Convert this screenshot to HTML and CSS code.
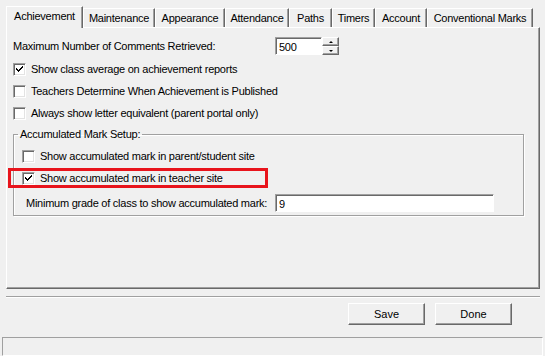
FILE: index.html
```html
<!DOCTYPE html>
<html lang="en">
<head>
    <meta charset="UTF-8">
    <meta name="viewport" content="width=device-width, initial-scale=1.0">
    <title>Achievement Settings</title>
    <link rel="stylesheet" href="styles.css">
</head>
<body>
    <div class="window">
        <div class="tabs">
            <div class="tab selected">Achievement</div>
            <div class="tab">Maintenance</div>
            <div class="tab">Appearance</div>
            <div class="tab">Attendance</div>
            <div class="tab">Paths</div>
            <div class="tab">Timers</div>
            <div class="tab">Account</div>
            <div class="tab">Conventional Marks</div>
        </div>

        <div class="panel">
            <div class="field-row">
                <label class="field-label">Maximum Number of Comments Retrieved:</label>
                <input class="textbox spin-input" type="text" value="500">
                <div class="spin">
                    <span class="spin-btn up"></span>
                    <span class="spin-btn down"></span>
                </div>
            </div>

            <div class="check-row">
                <span class="checkbox checked"></span>
                <span>Show class average on achievement reports</span>
            </div>
            <div class="check-row">
                <span class="checkbox"></span>
                <span>Teachers Determine When Achievement is Published</span>
            </div>
            <div class="check-row">
                <span class="checkbox"></span>
                <span>Always show letter equivalent (parent portal only)</span>
            </div>

            <fieldset class="group">
                <legend>Accumulated Mark Setup:</legend>
                <div class="check-row">
                    <span class="checkbox"></span>
                    <span>Show accumulated mark in parent/student site</span>
                </div>
                <div class="check-row highlight">
                    <span class="checkbox checked"></span>
                    <span>Show accumulated mark in teacher site</span>
                </div>
                <div class="field-row grade-row">
                    <label class="field-label grade-label">Minimum grade of class to show accumulated mark:</label>
                    <input class="textbox grade-input" type="text" value="9">
                </div>
            </fieldset>
        </div>

        <div class="separator"></div>

        <div class="actions">
            <button class="btn">Save</button>
            <button class="btn">Done</button>
        </div>

        <div class="status-bar"></div>
    </div>
</body>
</html>
```

FILE: styles.css
```css
body {
    margin: 0;
    background-color: #f0f0f0;
    font-family: "Liberation Sans", Arial, sans-serif;
    font-size: 11px;
    letter-spacing: -0.25px;
    color: #000;
}
.window {
    width: 545px;
    height: 356px;
    overflow: hidden;
}

/* tabs */
.tabs {
    display: flex;
    align-items: flex-end;
    padding: 6px 0 0 6px;
    margin-bottom: -1px;
    position: relative;
    z-index: 1;
}
.tab {
    height: 19px;
    line-height: 19px;
    margin-bottom: 1px;
    border-left: 1px solid #fff;
    border-top: 1px solid #fff;
    border-right: 1px solid #696969;
    box-shadow: inset -1px 0 0 #a0a0a0;
    box-sizing: border-box;
    white-space: nowrap;
    text-align: center;
    background-color: #f0f0f0;
}
.tab:nth-child(1) { width: 77px; }
.tab:nth-child(2) { width: 72px; }
.tab:nth-child(3) { width: 70px; }
.tab:nth-child(4) { width: 64px; }
.tab:nth-child(5) { width: 43px; }
.tab:nth-child(6) { width: 43px; }
.tab:nth-child(7) { width: 52px; }
.tab:nth-child(8) { width: 106px; }
.tab.selected {
    height: 22px;
    line-height: 19px;
    margin-bottom: 0;
}

/* panel */
.panel {
    margin-left: 6px;
    width: 534px;
    height: 262px;
    box-sizing: border-box;
    border-left: 1px solid #fff;
    border-top: 1px solid #fff;
    border-right: 1px solid #696969;
    border-bottom: 1px solid #696969;
    box-shadow: inset -1px -1px 0 #a0a0a0;
    padding: 9px 0 0 6px;
}
.field-row {
    display: flex;
    align-items: center;
    height: 18px;
}
.field-label {
    width: 262px;
    white-space: nowrap;
}
.textbox {
    height: 18px;
    box-sizing: border-box;
    border: 1px solid;
    border-color: #a0a0a0 #fff #fff #a0a0a0;
    box-shadow: inset 1px 1px 0 #696969;
    background: #fff;
    font-family: inherit;
    font-size: 11px;
    letter-spacing: -0.25px;
    padding: 1px 0 0 3px;
    margin: 0;
    outline: none;
}
.spin-input {
    width: 47px;
}
.spin {
    display: flex;
    flex-direction: column;
    width: 17px;
    height: 18px;
}
.spin-btn {
    flex: 1;
    border: 1px solid;
    border-color: #fff #696969 #696969 #fff;
    box-shadow: inset -1px -1px 0 #a0a0a0;
    display: flex;
    align-items: center;
    justify-content: center;
}
.spin-btn::after {
    content: "";
    border-left: 2px solid transparent;
    border-right: 2px solid transparent;
}
.spin-btn.up::after {
    border-bottom: 2px solid #000;
}
.spin-btn.down::after {
    border-top: 2px solid #000;
}

.check-row {
    display: flex;
    align-items: center;
    gap: 5px;
    height: 22px;
}
.panel > .field-row + .check-row {
    margin-top: 3px;
}
.checkbox {
    width: 13px;
    height: 13px;
    box-sizing: border-box;
    border: 1px solid;
    border-color: #a0a0a0 #fff #fff #a0a0a0;
    box-shadow: inset 1px 1px 0 #696969, inset -1px -1px 0 #e3e3e3;
    background: #fff;
    flex-shrink: 0;
}
.checkbox.checked {
    background: #fff url("data:image/svg+xml,%3Csvg xmlns='http://www.w3.org/2000/svg' width='11' height='11'%3E%3Cpath d='M2 4h1v1h1v1h1V5h1V4h1V3h1V2h1v2H8v1H7v1H6v1H5v1H4V7H3V6H2z' fill='%23000'/%3E%3C/svg%3E") no-repeat 0 0;
}

/* group box */
.group {
    margin: 4px 0 0 0;
    width: 511px;
    box-sizing: border-box;
    border: 1px solid #a0a0a0;
    box-shadow: 1px 1px 0 #fff, inset 1px 1px 0 #fff;
    padding: 4px 8px 3px 8px;
    min-width: 0;
}
.group legend {
    padding: 0 2px;
    margin-left: -4px;
    line-height: 13px;
}
.check-row.highlight {
    height: 20px;
    box-sizing: border-box;
    width: 260px;
    border: 3px solid #e8141c;
    margin: 1px 0 0 -14px;
    padding-left: 11px;
}
.grade-row {
    margin-top: 6px;
    padding-left: 4px;
}
.grade-label {
    width: 249px;
}
.grade-input {
    width: 219px;
}

/* bottom */
.separator {
    margin: 7px 5px 0 6px;
    height: 1px;
    background: #a0a0a0;
    border-bottom: 1px solid #fff;
}
.actions {
    display: flex;
    justify-content: flex-end;
    gap: 10px;
    padding-right: 33px;
    margin-top: 5px;
}
.btn {
    width: 77px;
    height: 22px;
    box-sizing: border-box;
    background: #f0f0f0;
    border: 1px solid;
    border-color: #fff #696969 #696969 #fff;
    box-shadow: inset -1px -1px 0 #a0a0a0;
    font-family: inherit;
    font-size: 11px;
    color: #000;
    padding: 0;
}
.status-bar {
    margin: 12px 2px 0 2px;
    height: 17px;
    border: 1px solid;
    border-color: #a0a0a0 #fff #fff #a0a0a0;
}
```
